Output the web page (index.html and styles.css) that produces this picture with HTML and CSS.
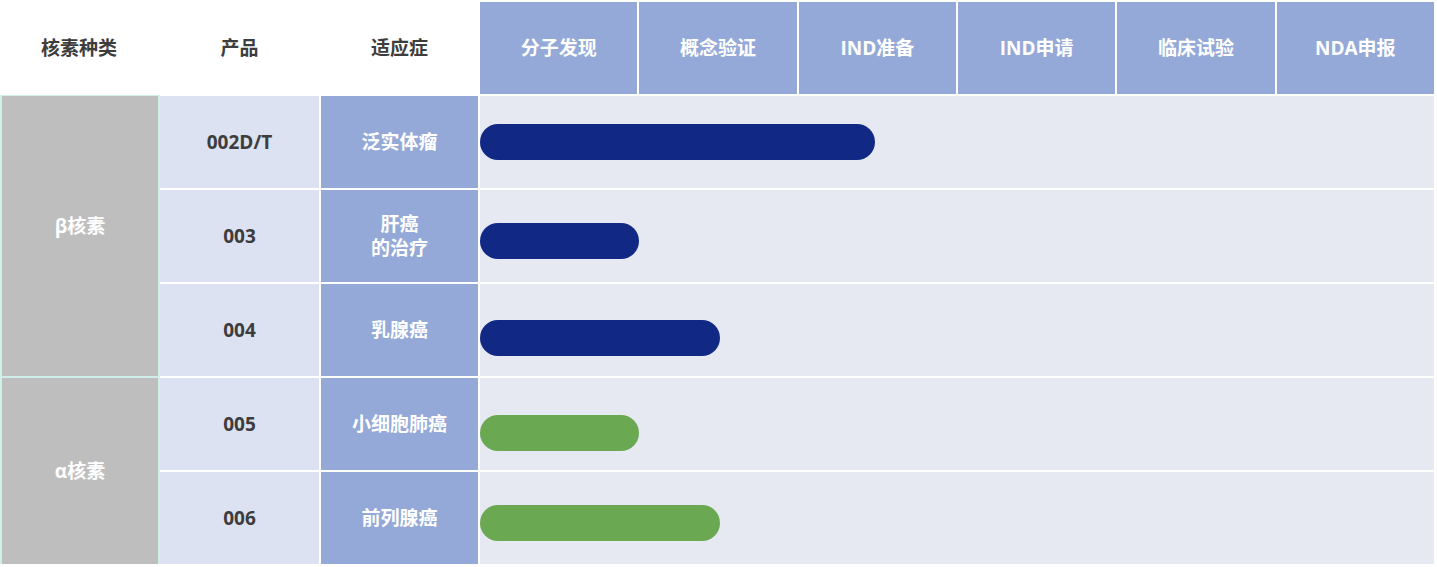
FILE: index.html
```html
<!DOCTYPE html>
<html lang="zh-CN">
<head>
<meta charset="utf-8">
<title>研发管线</title>
<link rel="stylesheet" href="styles.css">
</head>
<body>
<div class="chart">
  <div class="hcell">核素种类</div>
  <div class="hcell">产品</div>
  <div class="hcell">适应症</div>
  <div class="scell">分子发现</div>
  <div class="scell">概念验证</div>
  <div class="scell">IND准备</div>
  <div class="scell">IND申请</div>
  <div class="scell">临床试验</div>
  <div class="scell">NDA申报</div>

  <div class="nuclide nuclide-beta">β核素</div>
  <div class="nuclide nuclide-alpha">α核素</div>

  <div class="product r1">002D/T</div>
  <div class="indication r1">泛实体瘤</div>
  <div class="band r1"><div class="bar navy b1" style="width:395px"></div></div>

  <div class="product r2">003</div>
  <div class="indication r2">肝癌<br>的治疗</div>
  <div class="band r2"><div class="bar navy b2" style="width:159px"></div></div>

  <div class="product r3">004</div>
  <div class="indication r3">乳腺癌</div>
  <div class="band r3"><div class="bar navy b3" style="width:240px"></div></div>

  <div class="product r4">005</div>
  <div class="indication r4">小细胞肺癌</div>
  <div class="band r4"><div class="bar green b4" style="width:159px"></div></div>

  <div class="product r5">006</div>
  <div class="indication r5">前列腺癌</div>
  <div class="band r5"><div class="bar green b5" style="width:240px"></div></div>
</div>
</body>
</html>
```

FILE: styles.css
```css
html, body {
  margin: 0;
  padding: 0;
  background: #ffffff;
}

body {
  font-family: "Open Sans", "Noto Sans CJK SC", sans-serif;
  font-weight: 700;
  font-size: 19px;
}

.chart {
  display: grid;
  width: 1434px;
  padding-top: 2px;
  grid-template-columns: 158px 159px 157px repeat(6, 1fr);
  grid-template-rows: repeat(6, 92px);
  column-gap: 2px;
  row-gap: 2px;
}

.hcell,
.scell,
.product,
.indication,
.nuclide {
  display: flex;
  align-items: center;
  justify-content: center;
  text-align: center;
  line-height: 24px;
}

.hcell {
  color: #3d3d3d;
  background: #ffffff;
}

.scell {
  color: #ffffff;
  background: #94a9d7;
}

.nuclide {
  grid-column: 1;
  color: #ffffff;
  background: #bebebe;
  border: 2px solid #cfeee8;
  margin: -2px -2px -2px 0;
}

.nuclide-beta {
  grid-row: 2 / 5;
  border-top-width: 1px;
  margin-top: -1px;
  padding-bottom: 20px;
}

.nuclide-alpha {
  grid-row: 5 / 7;
}

.product {
  grid-column: 2;
  color: #3d3d3d;
  background: #dce2f1;
}

.indication {
  grid-column: 3;
  color: #ffffff;
  background: #94a9d7;
}

.band {
  grid-column: 4 / -1;
  background: #e6e9f2;
  display: flex;
  align-items: flex-start;
}

.r1 { grid-row: 2; }
.r2 { grid-row: 3; }
.r3 { grid-row: 4; }
.r4 { grid-row: 5; }
.r5 { grid-row: 6; }

.bar {
  height: 36px;
  border-radius: 18px;
}

.navy { background: #112884; }
.green { background: #6aa951; }

.b1 { margin-top: 28px; }
.b2 { margin-top: 33px; }
.b3 { margin-top: 36px; }
.b4 { margin-top: 37px; }
.b5 { margin-top: 33px; }
```
